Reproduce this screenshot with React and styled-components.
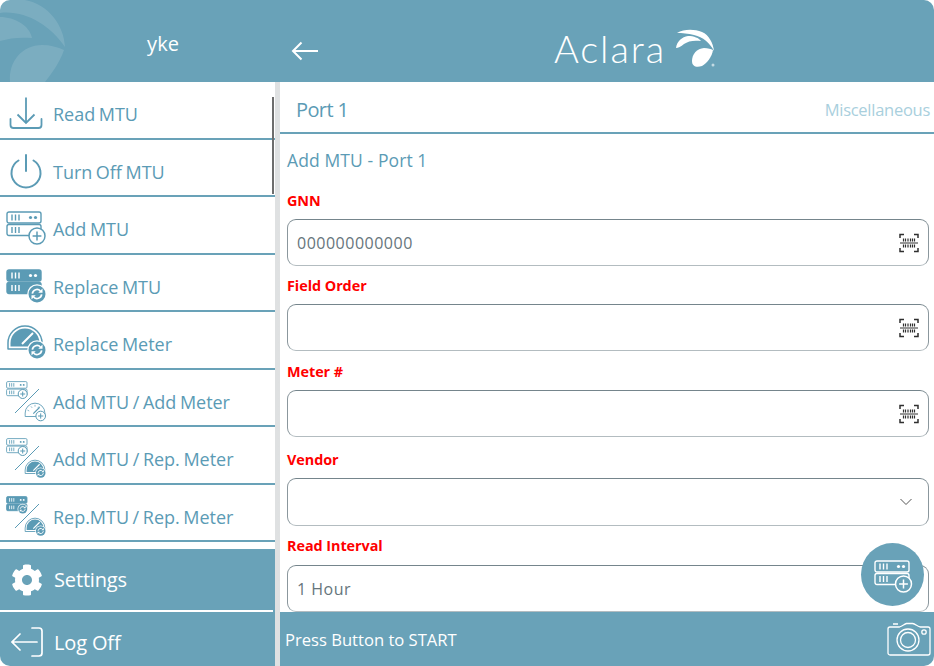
import React from 'react';
import styled, { createGlobalStyle } from 'styled-components';
import { FaCog } from 'react-icons/fa';

const TEAL = '#69a2b8';
const TEXT_TEAL = '#5b9bb5';

const GlobalStyle = createGlobalStyle`
  html, body {
    margin: 0;
    padding: 0;
    background: #fff;
  }
  * {
    box-sizing: border-box;
  }
`;

const Page = styled.div`
  position: relative;
  width: 934px;
  height: 666px;
  display: flex;
  overflow: hidden;
  border-radius: 10px;
  background: #fff;
  font-family: 'Open Sans', 'Noto Sans', sans-serif;
`;

const Sidebar = styled.aside`
  width: 280px;
  flex: none;
  display: flex;
  flex-direction: column;
  border-right: 5px solid #d3d8da;
  border-image: linear-gradient(90deg, #a3b2b7, #c9cfd1 30%, #dfe1e2) 1;
`;

const UserHeader = styled.div`
  position: relative;
  height: 82px;
  flex: none;
  margin-right: -5px;
  background: ${TEAL};
  color: #fff;
  font-size: 20px;
  display: flex;
  align-items: center;
  justify-content: center;
  padding-top: 4px;
  padding-left: 46px;
  overflow: hidden;
`;

const Watermark = styled.svg`
  position: absolute;
  left: 0;
  top: 0;
`;

const MenuList = styled.div`
  position: relative;
  height: 467px;
  flex: none;
  display: flex;
  flex-direction: column;
`;

const ScrollThumb = styled.div`
  position: absolute;
  right: 1px;
  top: 15px;
  width: 2px;
  height: 97px;
  background: #6d6d6d;
`;

const MenuRow = styled.div`
  height: 57.5px;
  flex: none;
  display: flex;
  align-items: center;
  gap: 7px;
  padding: 9px 0 0 6px;
  border-bottom: 2px solid ${TEAL};
  color: ${TEXT_TEAL};
  font-size: 18px;
  letter-spacing: -0.03px;
  word-spacing: -1px;
`;

const IconBox = styled.span`
  width: 40px;
  height: 40px;
  flex: none;
  display: flex;
  align-items: center;
  justify-content: center;
  color: ${TEXT_TEAL};
`;

const ActionRow = styled.div`
  height: ${(p) => p.$height}px;
  flex: none;
  display: flex;
  align-items: center;
  gap: 11px;
  padding: ${(p) => p.$top || 0}px 0 0 11px;
  background: ${TEAL};
  color: #fff;
  font-size: 20px;
  letter-spacing: -0.15px;
`;

const ActionDivider = styled.div`
  height: 2px;
  flex: none;
  background: linear-gradient(90deg, #fff 273px, ${TEAL} 273px);
`;

const Main = styled.main`
  flex: 1;
  min-width: 0;
  display: flex;
  flex-direction: column;
`;

const TopBar = styled.header`
  height: 82px;
  flex: none;
  display: flex;
  align-items: center;
  background: ${TEAL};
  color: #fff;
  padding: 20px 0 0 11px;
`;

const LogoWrap = styled.div`
  display: flex;
  align-items: center;
  gap: 6px;
  margin: -6px 0 0 235px;
`;

const LogoText = styled.span`
  font-family: Lato, 'Open Sans', sans-serif;
  font-weight: 300;
  font-size: 38px;
  letter-spacing: 1.9px;
`;

const TabBar = styled.div`
  height: 52px;
  flex: none;
  display: flex;
  align-items: center;
  justify-content: space-between;
  padding: 4px 4px 0 16px;
  border-bottom: 2px solid ${TEAL};
`;

const TabActive = styled.span`
  color: ${TEXT_TEAL};
  font-size: 20px;
  letter-spacing: -0.6px;
`;

const TabIdle = styled.span`
  color: #a9cfdd;
  font-size: 16.5px;
  letter-spacing: -0.27px;
`;

const Form = styled.div`
  flex: 1;
  min-height: 0;
  overflow: hidden;
  padding: 15px 5px 0 7px;
`;

const FormTitle = styled.div`
  color: ${TEXT_TEAL};
  font-size: 17.5px;
  line-height: 23px;
  letter-spacing: 0.1px;
  margin-bottom: 19px;
`;

const FieldLabel = styled.div`
  color: #ff0000;
  font-size: 14.4px;
  font-weight: 700;
  line-height: 20px;
  letter-spacing: -0.05px;
  margin-bottom: ${(p) => p.$gap || 8}px;
`;

const Field = styled.div`
  margin-bottom: ${(p) => p.$after}px;
`;

const InputBox = styled.div`
  height: ${(p) => (p.$tall ? 48 : 47)}px;
  display: flex;
  align-items: center;
  justify-content: space-between;
  padding: 0 9px;
  border: 1px solid #8b979d;
  border-top-color: #75858c;
  border-bottom-color: #b3bcc0;
  border-radius: 9px;
  color: #66757c;
  font-size: 16px;
  letter-spacing: 0.5px;
`;

const Footer = styled.footer`
  height: 54px;
  flex: none;
  display: flex;
  align-items: center;
  justify-content: space-between;
  padding: 0 3px 0 5px;
  background: ${TEAL};
  color: #fff;
  font-size: 16.6px;
`;

const Fab = styled.div`
  position: absolute;
  left: 861px;
  top: 543px;
  width: 63px;
  height: 63px;
  border-radius: 50%;
  background: ${TEAL};
  display: flex;
  align-items: center;
  justify-content: center;
`;

const ChevronSlot = styled.span`
  display: flex;
  margin-right: 6px;
`;

// server rack: two stacked units, slots on the left and leds on the right
const Rack = ({ x = 0, y = 0, s = 1, solid, color = 'currentColor' }) => (
  <g transform={`translate(${x} ${y}) scale(${s})`}>
    {[0, 12.5].map((dy) => (
      <rect key={dy} x="1" y={1 + dy} width="34" height="11" rx="2" fill={solid ? color : 'none'} stroke={color} strokeWidth="1.4" />
    ))}
    {[0, 12.5].map((dy) => (
      <path key={dy} d={`M6 ${3.5 + dy}v6M9.5 ${3.5 + dy}v6M13 ${3.5 + dy}v6`} stroke={solid ? '#fff' : color} strokeWidth="1.4" fill="none" />
    ))}
    <circle cx="24.5" cy="6.5" r="1.6" fill={solid ? '#fff' : color} />
    <circle cx="29.5" cy="6.5" r="1.6" fill={solid ? '#fff' : color} />
  </g>
);

const PlusBadge = ({ cx, cy, r, color = 'currentColor', bg = '#fff', w = 1.5 }) => (
  <g>
    <circle cx={cx} cy={cy} r={r} fill={bg} stroke={color} strokeWidth={w} />
    <path d={`M${cx - r * 0.55} ${cy}h${r * 1.1}M${cx} ${cy - r * 0.55}v${r * 1.1}`} stroke={color} strokeWidth={w} />
  </g>
);

// round badge with two chasing arrows, drawn at r=10 and scaled
const SwapBadge = ({ cx, cy, r }) => (
  <g transform={`translate(${cx} ${cy}) scale(${r / 10})`}>
    <circle r="11.5" fill="#fff" />
    <circle r="10" fill="currentColor" />
    <path d="M-5.5 -0.5A5.500 5.500 0 0 1 4 -3.500" fill="none" stroke="#fff" strokeWidth="2" />
    <path d="M5.500 0.500A5.500 5.500 0 0 1 -4 3.500" fill="none" stroke="#fff" strokeWidth="2" />
    <path d="M6.500 -6.500v5h-5zM-6.500 6.500v-5h5z" fill="#fff" />
  </g>
);

const Gauge = ({ x = 0, y = 0, s = 1, solid }) => (
  <g transform={`translate(${x} ${y}) scale(${s})`}>
    <path d="M2 25V19A17 17 0 0 1 36 19V25Z" fill="none" stroke="currentColor" strokeWidth="1.5" strokeLinejoin="round" />
    {solid && <path d="M4.500 22.500V19A14.500 14.500 0 0 1 33.500 19V22.500Z" fill="currentColor" />}
    {!solid && <path d="M6 14l3 1.500M12 7.500l2 2.500M19 5v3M26 7.500l-2 2.500" stroke="currentColor" strokeWidth="1.2" />}
    <path d="M16 20L27 9" stroke={solid ? '#fff' : 'currentColor'} strokeWidth="2" />
  </g>
);

const Slash = () => <path d="M9 31L33 7" stroke="currentColor" strokeWidth="1" fill="none" />;

const Icon40 = ({ children }) => (
  <svg width="40" height="40" viewBox="0 0 40 40" fill="none" overflow="visible">
    {children}
  </svg>
);

const ICONS = {
  read: (
    <Icon40>
      <path d="M20 3.500V29M11.500 20.500L20 29l8.500-8.500" stroke="currentColor" strokeWidth="1.8" />
      <path d="M4.500 25v6a3 3 0 0 0 3 3h25a3 3 0 0 0 3-3v-6" stroke="currentColor" strokeWidth="1.8" strokeLinecap="round" />
    </Icon40>
  ),
  power: (
    <Icon40>
      <path d="M12.500 8.500A14.500 14.500 0 1 0 27.500 8.500" stroke="currentColor" strokeWidth="2" strokeLinecap="round" />
      <path d="M20 3v16" stroke="currentColor" strokeWidth="2" strokeLinecap="round" />
    </Icon40>
  ),
  addMtu: (
    <Icon40>
      <Rack y="2" />
      <PlusBadge cx="31" cy="27" r="8" />
    </Icon40>
  ),
  repMtu: (
    <Icon40>
      <Rack y="2" solid />
      <SwapBadge cx="31" cy="27" r="8.500" />
    </Icon40>
  ),
  repMeter: (
    <Icon40>
      <Gauge y="0" solid />
      <SwapBadge cx="31" cy="26" r="8.500" />
    </Icon40>
  ),
  addAdd: (
    <Icon40>
      <Rack y="-1" s="0.6" />
      <PlusBadge cx="16.700" cy="12" r="4.500" w="1" />
      <Slash />
      <Gauge x="18" y="20" s="0.58" />
      <PlusBadge cx="34.700" cy="34" r="4.800" w="1" />
    </Icon40>
  ),
  addRep: (
    <Icon40>
      <Rack y="-1" s="0.6" />
      <PlusBadge cx="16.700" cy="12" r="4.500" w="1" />
      <Slash />
      <Gauge x="18" y="20" s="0.58" solid />
      <SwapBadge cx="34.700" cy="34" r="4.800" />
    </Icon40>
  ),
  repRep: (
    <Icon40>
      <Rack y="-1" s="0.6" solid />
      <SwapBadge cx="16.700" cy="12" r="4.500" />
      <Slash />
      <Gauge x="18" y="20" s="0.58" solid />
      <SwapBadge cx="34.700" cy="34" r="4.800" />
    </Icon40>
  ),
};

const MENU = [
  ['Read MTU', 'read'],
  ['Turn Off MTU', 'power'],
  ['Add MTU', 'addMtu'],
  ['Replace MTU', 'repMtu'],
  ['Replace Meter', 'repMeter'],
  ['Add MTU / Add Meter', 'addAdd'],
  ['Add MTU / Rep. Meter', 'addRep'],
  ['Rep.MTU / Rep. Meter', 'repRep'],
];

const BarcodeIcon = () => (
  <svg width="20" height="20" viewBox="0 0 20 20" fill="none" stroke="#2f2f2f" strokeWidth="1.5">
    <path d="M1 5V1.500h4M15 1.500h4V5M1 15v3.500h4M15 18.500h4V15" />
    <path d="M1 10h18" strokeWidth="1" />
    <path d="M4.500 5.500v3M6.500 5.500v3M9 5.500v3M11.500 5.500v3M13.500 5.500v3M15.500 5.500v3M4.500 11.500v3M6.500 11.500v3M9 11.500v3M11.500 11.500v3M13.500 11.500v3M15.500 11.500v3" strokeWidth="1.2" />
  </svg>
);

const Chevron = () => (
  <svg width="14" height="8" viewBox="0 0 14 8" fill="none" stroke="#555" strokeWidth="1">
    <path d="M1.500 1l5.500 5.500L12.500 1" />
  </svg>
);

const BackArrow = () => (
  <svg width="28" height="20" viewBox="0 0 28 20" fill="none" stroke="#fff" strokeWidth="2">
    <path d="M27 10H2M10.500 1.500L2 10l8.500 8.500" />
  </svg>
);

const LogoMark = () => (
  <svg width="44" height="38" viewBox="0 0 44 38" fill="#fff">
    <path d="M5 4C12 0 22 0 30 3c7 3 11 11 12 19C38 14 31 8 22 6 16 4.500 10 4 5 4z" />
    <path d="M4 19c1-7 6-11 12-12 6 0 11 2 13 5-7-1-13 0-17 3-3 2.500-6 4-8 4z" />
    <path d="M20 32c0-7 5-12.500 12-13 4 0 7 1 9 2-1 7-6 13-11 16-6 2-10 0-10-5z" />
    <circle cx="41" cy="36" r="1.500" opacity="0.6" />
  </svg>
);

const LogOffIcon = () => (
  <svg width="32" height="32" viewBox="0 0 32 32" fill="none" stroke="#fff" strokeWidth="1.7" strokeLinecap="round">
    <path d="M21 2h7a3 3 0 0 1 3 3v22a3 3 0 0 1-3 3h-7" />
    <path d="M26 16H1M9 8l-8 8 8 8" />
  </svg>
);

const CameraIcon = () => (
  <svg width="44" height="34" viewBox="0 0 44 34" fill="none" stroke="#fff" strokeWidth="1.3">
    <path d="M4 5h8.500c3-1 5-3 7-3.500h6c3 .500 5 3 8 3.500h7.500a2 2 0 0 1 2 2v24a2 2 0 0 1-2 2H3a2 2 0 0 1-2-2V7a2 2 0 0 1 2-2z" />
    <path d="M6 2h5" />
    <circle cx="21" cy="18" r="11" />
    <circle cx="21" cy="18" r="7.500" />
    <circle cx="37" cy="10" r="2.200" />
  </svg>
);

const FabIcon = () => (
  <svg width="40" height="36" viewBox="0 0 40 36" fill="none" color="#fff">
    <Rack x="1" y="3" />
    <PlusBadge cx="30.500" cy="27" r="8" color="#fff" bg={TEAL} />
  </svg>
);

const App = () => (
  <Page>
    <GlobalStyle />
    <Sidebar>
      <UserHeader>
        <Watermark width="66" height="82" viewBox="0 0 66 82" fill="#fff">
          <path opacity="0.12" d="M0 13C25 10 50 25 65 47 64 25 48 4 25 0H0z" />
          <path opacity="0.12" d="M0 17C15 17 30 26 32 38 20 37 10 38 0 41z" />
          <path opacity="0.12" d="M10 82C8 62 22 45 42 45c8 0 16 2 22 5-4 12-12 23-19 32z" />
        </Watermark>
        yke
      </UserHeader>
      <MenuList>
        {MENU.map(([label, icon]) => (
          <MenuRow key={label}>
            <IconBox>{ICONS[icon]}</IconBox>
            {label}
          </MenuRow>
        ))}
        <ScrollThumb />
      </MenuList>
      <ActionRow $height={61}>
        <FaCog size={32} />
        Settings
      </ActionRow>
      <ActionDivider />
      <ActionRow $height={54} $top={6}>
        <LogOffIcon />
        Log Off
      </ActionRow>
    </Sidebar>
    <Main>
      <TopBar>
        <BackArrow />
        <LogoWrap>
          <LogoText>Aclara</LogoText>
          <LogoMark />
        </LogoWrap>
      </TopBar>
      <TabBar>
        <TabActive>Port 1</TabActive>
        <TabIdle>Miscellaneous</TabIdle>
      </TabBar>
      <Form>
        <FormTitle>Add MTU - Port 1</FormTitle>
        <Field $after={10}>
          <FieldLabel>GNN</FieldLabel>
          <InputBox>
            000000000000
            <BarcodeIcon />
          </InputBox>
        </Field>
        <Field $after={11}>
          <FieldLabel>Field Order</FieldLabel>
          <InputBox>
            <span />
            <BarcodeIcon />
          </InputBox>
        </Field>
        <Field $after={13}>
          <FieldLabel>Meter #</FieldLabel>
          <InputBox>
            <span />
            <BarcodeIcon />
          </InputBox>
        </Field>
        <Field $after={10}>
          <FieldLabel>Vendor</FieldLabel>
          <InputBox $tall>
            <span />
            <ChevronSlot>
              <Chevron />
            </ChevronSlot>
          </InputBox>
        </Field>
        <Field $after={0}>
          <FieldLabel $gap={9}>Read Interval</FieldLabel>
          <InputBox>1 Hour</InputBox>
        </Field>
      </Form>
      <Footer>
        Press Button to START
        <CameraIcon />
      </Footer>
    </Main>
    <Fab>
      <FabIcon />
    </Fab>
  </Page>
);

export default App;
